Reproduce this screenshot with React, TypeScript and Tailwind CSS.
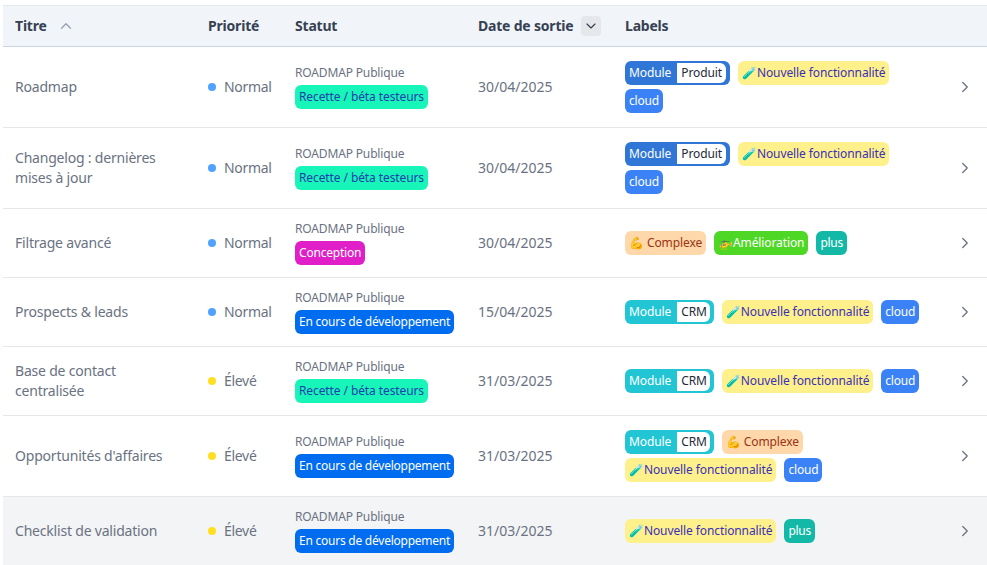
const Chevron = ({ cls, d }: { cls: string; d: string }) => (
  <svg viewBox="0 0 24 24" fill="none" stroke="currentColor" strokeWidth="1.75" strokeLinecap="round" strokeLinejoin="round" className={cls}>
    <path d={d} />
  </svg>
);

const Badge = ({ cls, children }: { cls: string; children: React.ReactNode }) => (
  <span className={`inline-flex h-6 items-center whitespace-nowrap rounded-md px-1 text-xs ${cls}`}>{children}</span>
);

const Module = ({ name, outer, inner }: { name: string; outer: string; inner: string }) => (
  <span className={`inline-flex h-6 items-center whitespace-nowrap rounded-md pl-1 pr-1 text-xs tracking-[-0.1px] text-white ${outer}`}>
    Module
    <span className={`ml-1.5 flex h-5 items-center rounded-r-md bg-white pl-1 text-gray-800 ${inner}`}>{name}</span>
  </span>
);

const Produit = () => <Module name="Produit" outer="bg-[#2f76d6]" inner="pr-1" />;
const Crm = () => <Module name="CRM" outer="bg-[#22c5d3]" inner="pr-[3px]" />;
const Nouvelle = () => <Badge cls="bg-[#fef08a] tracking-[-0.1px] text-[#3b30b8]">🧪Nouvelle fonctionnalité</Badge>;
const Cloud = () => <Badge cls="bg-[#3b82f6] tracking-[-0.2px] text-white">cloud</Badge>;
const Plus = () => <Badge cls="bg-[#14b8a6] tracking-[-0.3px] text-white">plus</Badge>;
const Complexe = () => <Badge cls="bg-[#fed7aa] tracking-[-0.1px] text-[#9a3412]">💪 Complexe</Badge>;
const Amelioration = () => <Badge cls="bg-[#4ed725] tracking-[-0.1px] text-white">🚁Amélioration</Badge>;

const recette = <Badge cls="bg-[#17f5b8] tracking-[-0.1px] text-[#1e40af]">Recette / béta testeurs</Badge>;
const conception = <Badge cls="bg-[#e11fc8] tracking-[-0.2px] text-white">Conception</Badge>;
const encours = <Badge cls="bg-[#006cf0] tracking-[-0.24px] text-white">En cours de développement</Badge>;

const rows = [
  { title: "Roadmap", prio: "Normal", status: recette, date: "30/04/2025", labels: [<Produit />, <Nouvelle />, <Cloud />] },
  { title: "Changelog : dernières mises à jour", prio: "Normal", status: recette, date: "30/04/2025", labels: [<Produit />, <Nouvelle />, <Cloud />] },
  { title: "Filtrage avancé", prio: "Normal", status: conception, date: "30/04/2025", labels: [<Complexe />, <Amelioration />, <Plus />] },
  { title: "Prospects & leads", prio: "Normal", status: encours, date: "15/04/2025", labels: [<Crm />, <Nouvelle />, <Cloud />] },
  { title: "Base de contact centralisée", prio: "Élevé", status: recette, date: "31/03/2025", labels: [<Crm />, <Nouvelle />, <Cloud />] },
  { title: "Opportunités d'affaires", prio: "Élevé", status: encours, date: "31/03/2025", labels: [<Crm />, <Complexe />, <Nouvelle />, <Cloud />] },
  { title: "Checklist de validation", prio: "Élevé", status: encours, date: "31/03/2025", labels: [<Nouvelle />, <Plus />], hover: true },
];

export default function App() {
  return (
    <div className="h-[565px] overflow-hidden bg-white pl-[3px] pt-[5px] font-['Noto_Sans',sans-serif] text-sm text-gray-500">
      <table className="w-[984px] table-fixed border-collapse">
        <colgroup>
          <col className="w-[193px]" />
          <col className="w-[87px]" />
          <col className="w-[183px]" />
          <col className="w-[147px]" />
          <col className="w-[324px]" />
          <col />
        </colgroup>
        <thead>
          <tr className="h-[41px] border-y border-t-gray-200 border-b-slate-300 bg-slate-100 text-left font-bold tracking-[-0.2px] text-gray-700">
            <th className="px-3">
              <span className="flex items-center gap-2.5">
                Titre
                <Chevron cls="h-[18px] w-[18px] text-gray-400" d="m18 15-6-6-6 6" />
              </span>
            </th>
            <th className="px-3">Priorité</th>
            <th className="px-3">Statut</th>
            <th className="px-3">
              <span className="flex items-center gap-2 whitespace-nowrap">
                Date de sortie
                <span className="flex h-5 w-5 items-center justify-center rounded bg-gray-200">
                  <Chevron cls="h-4 w-4" d="m6 9 6 6 6-6" />
                </span>
              </span>
            </th>
            <th className="px-3">Labels</th>
            <th />
          </tr>
        </thead>
        <tbody>
          {rows.map((r) => (
            <tr key={r.title} className={`border-b border-gray-200 ${r.hover ? "bg-gray-100" : ""}`}>
              <td className="px-3 py-3 leading-5 tracking-[-0.2px]">{r.title}</td>
              <td className="px-3 py-3">
                <span className="flex items-center gap-2 tracking-[-0.3px]">
                  <span className={`h-2 w-2 shrink-0 rounded-full ${r.prio === "Normal" ? "bg-blue-400" : "bg-yellow-300"}`} />
                  {r.prio}
                </span>
              </td>
              <td className="px-3 py-3">
                <div className="flex flex-col items-start gap-1">
                  <span className="text-xs tracking-[-0.15px]">ROADMAP Publique</span>
                  {r.status}
                </div>
              </td>
              <td className="px-3 py-3">{r.date}</td>
              <td className="px-3 py-3">
                <div className="my-0.5 flex flex-wrap gap-x-2 gap-y-1">
                  {r.labels.map((l, i) => (
                    <span key={i}>{l}</span>
                  ))}
                </div>
              </td>
              <td className="pl-[19px]">
                <Chevron cls="h-[18px] w-[18px]" d="m9 18 6-6-6-6" />
              </td>
            </tr>
          ))}
        </tbody>
      </table>
    </div>
  );
}
